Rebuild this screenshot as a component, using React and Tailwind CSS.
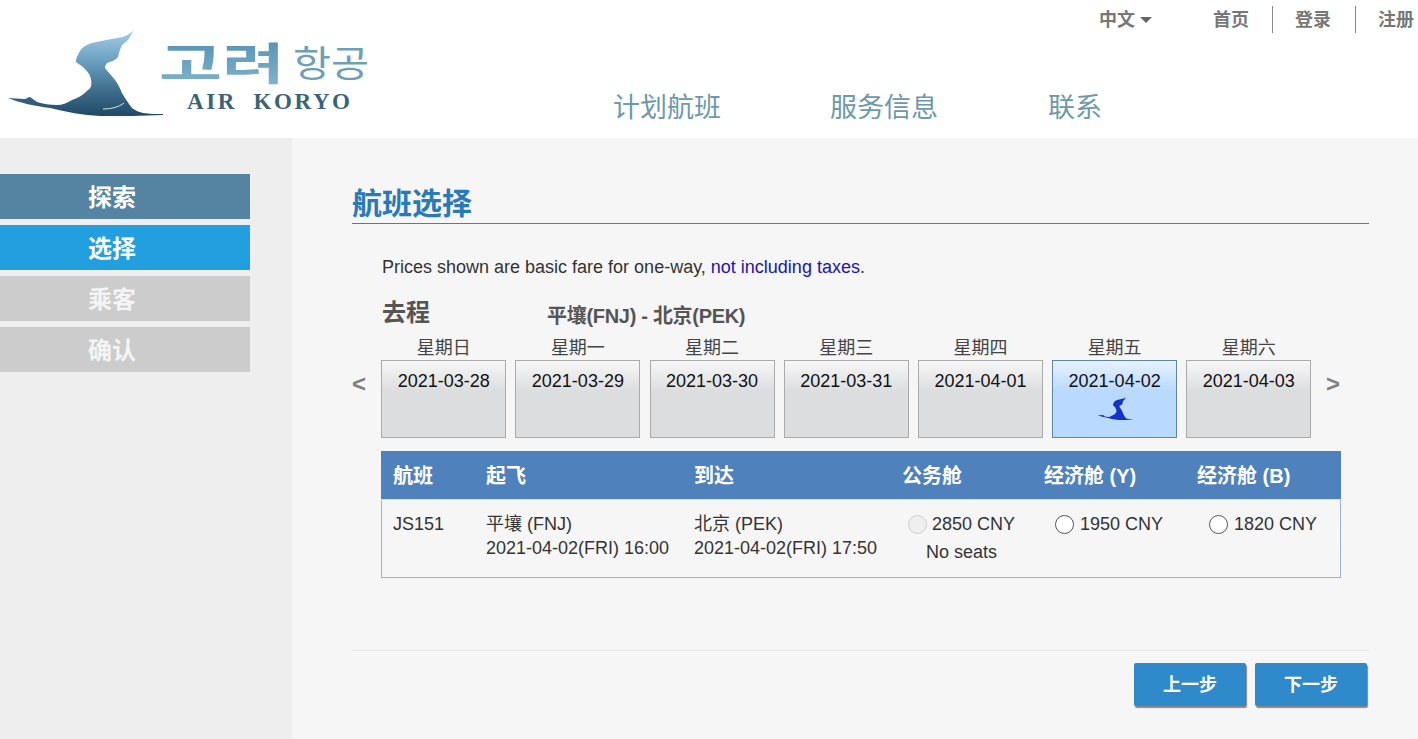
const FONT = '"Liberation Sans","Noto Sans CJK SC",sans-serif';
const BIRD = "M134 29 C131 34 125 37 117 38 C108 40 99 41 92 43 C85 45 80 49 78 55 C76 58 76 60 76 62 C78 64 81 65 83 67 C87 71 91 75 91 80 C92 85 91 88 88 90 C83 95 78 98 72 100 C67 103 62 105 57 105 C50 105 43 104 37 102 C34 100 32 98 30 97 C28 97 26 99 25 99 L8 98 C20 103 35 106 50 108 C66 112 83 115 100 116 C121 116 142 116 163 115 L163 114 C156 114 149 114 143 113 C138 112 135 110 132 108 C128 103 125 98 122 93 C120 88 118 84 115 80 C112 76 108 72 105 68 C105 66 106 64 107 63 C112 61 116 60 118 57 C119 53 120 49 122 45 C124 43 126 42 128 40 C130 37 132 33 134 29 Z";

function Logo() {
  return (
    <svg width="380" height="125" viewBox="0 0 380 125" className="block">
      <defs>
        <linearGradient id="birdg" x1="0" y1="0" x2="0" y2="1">
          <stop offset="0" stopColor="#a6d0ea" />
          <stop offset="0.35" stopColor="#6da2c2" />
          <stop offset="0.7" stopColor="#3f6f8d" />
          <stop offset="1" stopColor="#1f4a66" />
        </linearGradient>
        <linearGradient id="txtg" x1="0" y1="0" x2="0" y2="1">
          <stop offset="0" stopColor="#4f8cab" />
          <stop offset="1" stopColor="#86b7d2" />
        </linearGradient>
      </defs>
      <path d={BIRD} fill="url(#birdg)" />
      <path d="M103 109 C112 109 119 107 124 103" stroke="#cfe0ea" strokeWidth="1" fill="none" />
      <text x="159" y="80" fontFamily='"Noto Sans CJK KR",sans-serif' fontWeight="700" fontSize="44" fill="url(#txtg)" textLength="126" lengthAdjust="spacingAndGlyphs">고려</text>
      <text x="293" y="77" fontFamily='"Noto Sans CJK KR",sans-serif' fontWeight="400" fontSize="36" fill="#6f9fb6" textLength="76" lengthAdjust="spacingAndGlyphs">항공</text>
      <text x="187" y="109" fontFamily='"Liberation Serif",serif' fontWeight="700" fontSize="23" fill="#3a6378" textLength="163" lengthAdjust="spacing" xmlSpace="preserve">AIR  KORYO</text>
    </svg>
  );
}

function SmallBird() {
  return (
    <svg width="38" height="27" viewBox="0 20 170 100" className="block" preserveAspectRatio="none">
      <path d={BIRD} fill="#1233c4" />
    </svg>
  );
}

const DAYS = [
  ["星期日", "2021-03-28"],
  ["星期一", "2021-03-29"],
  ["星期二", "2021-03-30"],
  ["星期三", "2021-03-31"],
  ["星期四", "2021-04-01"],
  ["星期五", "2021-04-02", true],
  ["星期六", "2021-04-03"],
];

const STEPS = [
  ["探索", "bg-[#5584a3] text-white"],
  ["选择", "bg-[#229fdf] text-white"],
  ["乘客", "bg-[#cccccc] text-[#f4f4f4]"],
  ["确认", "bg-[#cccccc] text-[#f4f4f4]"],
];

function Radio({ disabled }) {
  return (
    <span className={"inline-block w-[19px] h-[19px] rounded-full border shrink-0 " + (disabled ? "border-[#cfcfcf] bg-[#efefef]" : "border-[#555] bg-white")} />
  );
}

export default function App() {
  return (
    <div className="w-full h-screen overflow-hidden flex flex-col bg-white text-[18px] text-[#333]" style={{ fontFamily: FONT }}>
      <header className="h-[138px] shrink-0 relative bg-white flex">
        <div className="w-[613px] shrink-0"><Logo /></div>
        <nav className="flex items-start pt-[90px] text-[27px] leading-[36px] text-[#6c9aa8]">
          <a className="w-[217px]">计划航班</a>
          <a className="w-[218px]">服务信息</a>
          <a>联系</a>
        </nav>
        <div className="absolute top-[6px] left-[1099px] flex items-center h-[27px] text-[18px] font-bold text-[#777] whitespace-nowrap">
          <span className="pt-[2px]">中文</span>
          <span className="ml-[5px] mt-[1px] w-0 h-0 border-x-[6px] border-x-transparent border-t-[6px] border-t-[#666]" />
          <span className="ml-[61px] pt-[2px]">首页</span>
          <span className="ml-[23px] w-px h-[27px] bg-[#888]" />
          <span className="ml-[22px] pt-[2px]">登录</span>
          <span className="ml-[24px] w-px h-[27px] bg-[#888]" />
          <span className="ml-[22px] pt-[2px]">注册</span>
        </div>
      </header>

      <div className="flex-1 flex min-h-0">
        <aside className="w-[292px] shrink-0 bg-[#eeeeee] pt-[36px] flex flex-col gap-[6px]">
          {STEPS.map(([t, c]) => (
            <div key={t} className={"w-[250px] h-[45px] flex items-center pl-[88px] pt-[2px] text-[24px] font-bold " + c}>{t}</div>
          ))}
        </aside>

        <main className="flex-1 bg-[#f6f6f6] pl-[60px] pr-[49px] pt-[46px]">
          <h1 className="h-[40px] border-b border-[#3584c4] text-[30px] leading-[40px] font-bold text-[#2a7ab9]">航班选择</h1>

          <p className="pl-[30px] mt-[32px] leading-[22px]">
            Prices shown are basic fare for one-way, <span className="text-[#1a14b8]">not including taxes</span>.
          </p>

          <div className="pl-[30px] mt-[19px] flex items-center h-[34px] font-bold text-[#555]">
            <span className="w-[165px] text-[24px] mb-[2px]">去程</span>
            <span className="text-[20px] tracking-[-0.3px] mt-[4px]">平壤(FNJ) - 北京(PEK)</span>
          </div>

          <div className="mt-[4px] flex relative pl-[29.2px]">
            <span className="absolute left-0 top-[34px] text-[24px] font-bold leading-[30px] text-[#808080]">&lt;</span>
            <div className="flex gap-[9.2px]">
              {DAYS.map(([d, date, sel]) => (
                <div key={date} className="w-[125px] flex flex-col items-center">
                  <div className="h-[25px] leading-[27px] text-[#444]">{d}</div>
                  <div className={"w-[125px] h-[78px] border flex flex-col items-center pt-[9px] text-[#111] " + (sel ? "border-[#5f86a8] bg-gradient-to-b from-[#e6f2ff] to-[#b9d9ff] to-40%" : "border-[#aaaaaa] bg-gradient-to-b from-[#f7f7f7] to-[#dcdddf] to-40%")}>
                    <div className="leading-[22px]">{date}</div>
                    {sel && <div className="mt-[2px]"><SmallBird /></div>}
                  </div>
                </div>
              ))}
            </div>
            <span className="absolute left-[974px] top-[34px] text-[24px] font-bold leading-[30px] text-[#808080]">&gt;</span>
          </div>

          <div className="ml-[29px] w-[960px] mt-[13px] border border-[#9db3d4] border-t-0">
            <div className="h-[49px] pt-[1px] bg-[#4f81bd] text-white font-bold text-[20px] flex items-center border-b border-[#cfe3f5] -mx-px">
              <span className="w-[105px] pl-[12px]">航班</span>
              <span className="w-[208px]">起飞</span>
              <span className="w-[208px]">到达</span>
              <span className="w-[142px]">公务舱</span>
              <span className="w-[153px]">经济舱 (Y)</span>
              <span>经济舱 (B)</span>
            </div>
            <div className="h-[77px] flex pt-[12px] leading-[24px] text-[#333]">
              <div className="w-[104px] pl-[11px]">JS151</div>
              <div className="w-[208px]">
                <div>平壤 (FNJ)</div>
                <div>2021-04-02(FRI) 16:00</div>
              </div>
              <div className="w-[208px]">
                <div>北京 (PEK)</div>
                <div>2021-04-02(FRI) 17:50</div>
              </div>
              <div className="w-[153px] pl-[6px]">
                <div className="flex items-center gap-[5px]"><Radio disabled />2850 CNY</div>
                <div className="pl-[18px] mt-[4px]">No seats</div>
              </div>
              <div className="w-[154px]">
                <div className="flex items-center gap-[6px]"><Radio />1950 CNY</div>
              </div>
              <div>
                <div className="flex items-center gap-[6px]"><Radio />1820 CNY</div>
              </div>
            </div>
          </div>

          <div className="mt-[72px] border-t border-[#e6e6e6] pt-[12px] flex justify-end gap-[9px] pr-[2px]">
            <button className="w-[112px] h-[43px] pt-[2px] rounded-[2px] bg-[#2f8acb] text-white font-bold text-[18px] shadow-[1px_2px_1px_#888]">上一步</button>
            <button className="w-[112px] h-[43px] pt-[2px] rounded-[2px] bg-[#2f8acb] text-white font-bold text-[18px] shadow-[1px_2px_1px_#888]">下一步</button>
          </div>
        </main>
      </div>
    </div>
  );
}
